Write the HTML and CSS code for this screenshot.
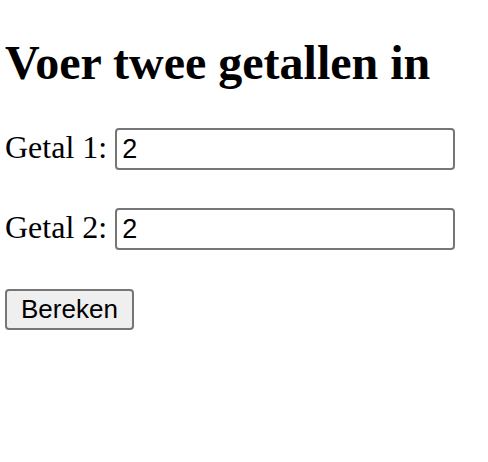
FILE: index.html
```html
<!DOCTYPE html>
<html lang="nl">
<head>
<meta charset="utf-8">
<title>Rekenen</title>
<link rel="stylesheet" href="styles.css">
</head>
<body>
<h1 class="title">Voer twee getallen in</h1>
<form class="form">
  <div class="row">
    <label class="label" for="g1">Getal 1:</label>
    <input class="field" id="g1" type="text" value="2">
  </div>
  <div class="row">
    <label class="label" for="g2">Getal 2:</label>
    <input class="field" id="g2" type="text" value="2">
  </div>
  <div class="row">
    <button class="btn" type="button">Bereken</button>
  </div>
</form>
</body>
</html>
```
FILE: styles.css
```css
html, body {
  margin: 0;
  padding: 0;
  background: #fff;
}
body {
  padding: 0 5px;
  font-family: "Liberation Serif", "Times New Roman", serif;
  color: #000;
}
.title {
  font-size: 48px;
  font-weight: bold;
  line-height: 55px;
  margin: 35px 0 38px;
}
.form {
  display: flex;
  flex-direction: column;
  gap: 38px;
}
.row {
  display: flex;
  align-items: center;
  gap: 8px;
}
.label {
  font-size: 32px;
  line-height: 36px;
  padding-bottom: 5px;
}
.field {
  box-sizing: border-box;
  width: 340px;
  height: 42px;
  margin: 0;
  padding: 0 5px;
  border: 2px solid #767676;
  border-radius: 4px;
  font-family: "Liberation Sans", Arial, sans-serif;
  font-size: 27px;
  color: #000;
  background: #fff;
}
.btn {
  box-sizing: border-box;
  height: 41px;
  margin: 1px 0 0;
  padding: 0 14px;
  border: 2px solid #767676;
  border-radius: 4px;
  background: #efefef;
  font-family: "Liberation Sans", Arial, sans-serif;
  font-size: 26px;
  color: #000;
}
```
